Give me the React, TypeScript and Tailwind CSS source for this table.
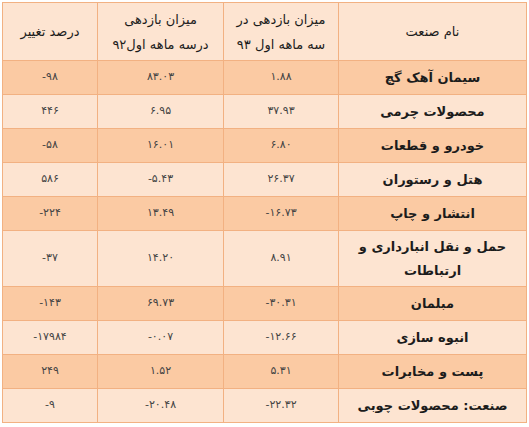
import React from "react";

type Row = {
  name: React.ReactNode;
  y93: string;
  y92: string;
  change: string;
  tall?: boolean;
};

const rows: Row[] = [
  { name: "سیمان آهک گچ", y93: "۱.۸۸", y92: "۸۳.۰۳", change: "-۹۸" },
  { name: "محصولات چرمی", y93: "۳۷.۹۳", y92: "۶.۹۵", change: "۴۴۶" },
  { name: "خودرو و قطعات", y93: "۶.۸۰", y92: "۱۶.۰۱", change: "-۵۸" },
  { name: "هتل و رستوران", y93: "۲۶.۳۷", y92: "-۵.۴۳", change: "۵۸۶" },
  { name: "انتشار و چاپ", y93: "-۱۶.۷۳", y92: "۱۳.۴۹", change: "-۲۲۴" },
  {
    name: (
      <>
        حمل و نقل انبارداری و
        <br />
        ارتباطات
      </>
    ),
    y93: "۸.۹۱",
    y92: "۱۴.۲۰",
    change: "-۳۷",
    tall: true,
  },
  { name: "مبلمان", y93: "-۳۰.۳۱", y92: "۶۹.۷۳", change: "-۱۴۳" },
  { name: "انبوه سازی", y93: "-۱۲.۶۶", y92: "-۰.۰۷", change: "-۱۷۹۸۴" },
  { name: "پست و مخابرات", y93: "۵.۳۱", y92: "۱.۵۲", change: "۲۴۹" },
  { name: "صنعت: محصولات چوبی", y93: "-۲۲.۳۲", y92: "-۲۰.۴۸", change: "-۹" },
];

const cell = "border border-[#F2B182] text-center align-middle p-0";

function App() {
  return (
    <div className="w-[529px] h-[427px] bg-white pt-[2px] pl-[2px]">
      <table
        dir="rtl"
        className="table-fixed border-collapse w-[524px] text-[#1c1c1c]"
        style={{ fontFamily: '"DejaVu Sans", sans-serif' }}
      >
        <colgroup>
          <col className="w-[188px]" />
          <col className="w-[115px]" />
          <col className="w-[126px]" />
          <col className="w-[95px]" />
        </colgroup>
        <thead>
          <tr className="h-[58px] bg-[#FDE4D1] text-[13px] leading-[25px]">
            <th className={`${cell} font-normal`}>نام صنعت</th>
            <th className={`${cell} font-normal`}>
              میزان بازدهی در
              <br />
              سه ماهه اول ۹۳
            </th>
            <th className={`${cell} font-normal`}>
              میزان بازدهی
              <br />
              درسه ماهه اول۹۲
            </th>
            <th className={`${cell} font-normal`}>درصد تغییر</th>
          </tr>
        </thead>
        <tbody>
          {rows.map((r, i) => (
            <tr
              key={i}
              className={`${r.tall ? "h-[56px]" : "h-[34px]"} ${
                i % 2 === 0 ? "bg-[#FBCAA3]" : "bg-[#FDE4D1]"
              }`}
            >
              <td className={`${cell} text-[13px] font-bold leading-[24px]`}>{r.name}</td>
              <td className={`${cell} text-[11px] text-[#444]`}>
                <span dir="ltr">{r.y93}</span>
              </td>
              <td className={`${cell} text-[11px] text-[#444]`}>
                <span dir="ltr">{r.y92}</span>
              </td>
              <td className={`${cell} text-[11px] text-[#444]`}>
                <span dir="ltr">{r.change}</span>
              </td>
            </tr>
          ))}
        </tbody>
      </table>
    </div>
  );
}

export default App;
